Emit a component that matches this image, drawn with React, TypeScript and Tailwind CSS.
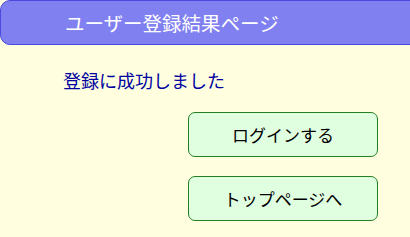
export default function App() {
  return (
    <div className="w-[410px] h-[237px] overflow-hidden bg-[#ffffe0] font-['Noto_Sans_CJK_JP',sans-serif]">
      <div className="w-[430px] h-[45px] rounded-[10px] border border-[#4a4ae0] bg-[#8080f0] flex items-center pl-[64px]">
        <h1 className="text-[19.5px] leading-none text-white">ユーザー登録結果ページ</h1>
      </div>
      <p className="mt-[25px] pl-[63px] text-[18px] leading-[20px] text-[#0000a0]">登録に成功しました</p>
      <div className="mt-[22px] ml-[188px] flex flex-col gap-[19px]">
        <button className="w-[190px] h-[45px] rounded-[7px] border border-[#228022] bg-[#e0ffe0] text-[17px] text-black">
          ログインする
        </button>
        <button className="w-[190px] h-[45px] rounded-[7px] border border-[#228022] bg-[#e0ffe0] text-[17px] text-black">
          トップページへ
        </button>
      </div>
    </div>
  );
}
